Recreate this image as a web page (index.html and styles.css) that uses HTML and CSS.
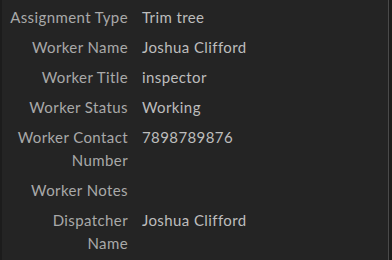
FILE: index.html
```html
<!DOCTYPE html>
<html lang="en">
<head>
    <meta charset="UTF-8">
    <title>Assignment details</title>
    <link rel="stylesheet" href="styles.css">
</head>
<body>
    <div class="panel">
        <table class="fields">
            <tr>
                <th>Assignment Type</th>
                <td>Trim tree</td>
            </tr>
            <tr>
                <th>Worker Name</th>
                <td>Joshua Clifford</td>
            </tr>
            <tr>
                <th>Worker Title</th>
                <td>inspector</td>
            </tr>
            <tr>
                <th>Worker Status</th>
                <td>Working</td>
            </tr>
            <tr>
                <th>Worker Contact Number</th>
                <td>7898789876</td>
            </tr>
            <tr>
                <th>Worker Notes</th>
                <td></td>
            </tr>
            <tr>
                <th>Dispatcher Name</th>
                <td>Joshua Clifford</td>
            </tr>
        </table>
    </div>
</body>
</html>
```

FILE: styles.css
```css
body {
    margin: 0;
    background: #242424;
    font-family: Lato, "Open Sans", sans-serif;
}

.panel {
    height: 260px;
    box-sizing: border-box;
    background: #242424;
    border-left: 2px solid #1c1c1c;
    border-right: 3px solid #1c1c1c;
    box-shadow: inset -1px 0 0 #4a4a4a;
    overflow: hidden;
}

.fields {
    border-collapse: collapse;
    margin-top: 2px;
}

.fields th,
.fields td {
    padding: 3.5px 0;
    font-size: 15px;
    line-height: 23px;
    letter-spacing: 0.4px;
    vertical-align: top;
}

.fields th {
    width: 118px;
    padding-left: 8px;
    padding-right: 14px;
    text-align: right;
    font-weight: normal;
    color: #a9a9a9;
}

.fields td {
    color: #bdbdbd;
}
```
